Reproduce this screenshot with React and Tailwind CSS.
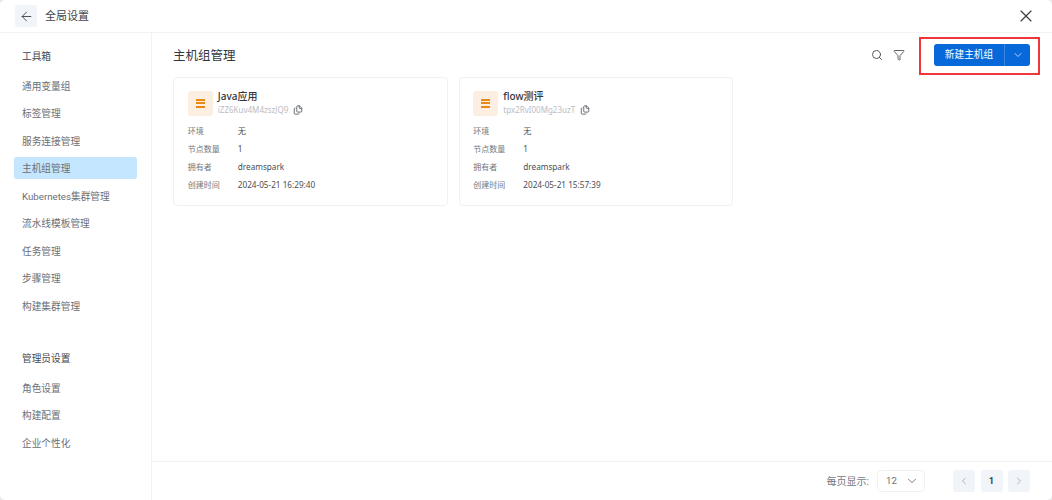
import React from "react";
import { ArrowLeft, X, Search, Filter, ChevronDown, ChevronLeft, ChevronRight, Files } from "lucide-react";

const tools = ["通用变量组", "标签管理", "服务连接管理", "主机组管理", "Kubernetes集群管理", "流水线模板管理", "任务管理", "步骤管理", "构建集群管理"];
const admin = ["角色设置", "构建配置", "企业个性化"];

function NavItem({ label, active }) {
  return (
    <div className={"h-[22px] mb-[5.5px] pl-2 pt-[4px] rounded-[3px] flex items-center text-[9.7px] text-[#6b6f76] " + (active ? "bg-[#c4e6ff] text-[#3d4249]" : "")}>
      {label}
    </div>
  );
}

function Row({ k, v }) {
  return (
    <div className="flex items-center h-[18px] text-[8.2px]">
      <span className="w-[50px] text-[8px] text-[#74787e]">{k}</span>
      <span className="text-[#4a4e54]">{v}</span>
    </div>
  );
}

function Card({ name, id, time }) {
  return (
    <div className="w-[274.5px] h-[129px] border border-[#f0f1f3] rounded-[4px] bg-white pt-[12px] pl-[13.8px]" style={{ fontFamily: '"Noto Sans", "Noto Sans CJK SC", sans-serif' }}>
      <div className="flex items-center gap-[5px] h-[26px]">
        <div className="w-[25px] h-[25px] rounded-[3px] bg-[#fdeee2] flex flex-col items-center justify-center gap-[1.5px]">
          <span className="block w-[9px] h-[2px] bg-[#ea8a16]" />
          <span className="block w-[9px] h-[2px] bg-[#ea8a16]" />
          <span className="block w-[9px] h-[2px] bg-[#ea8a16]" />
        </div>
        <div className="flex flex-col">
          <span className="text-[10px] leading-[12px] font-medium text-[#33373d]">{name}</span>
          <span className="mt-[2px] flex items-center gap-[5px] text-[8px] leading-[12px] text-[#b9bdc4]">
            {id}
            <Files size={10} strokeWidth={2.2} className="text-[#5f646b]" />
          </span>
        </div>
      </div>
      <div className="mt-[6px]">
        <Row k="环境" v="无" />
        <Row k="节点数量" v="1" />
        <Row k="拥有者" v="dreamspark" />
        <Row k="创建时间" v={time} />
      </div>
    </div>
  );
}

export default function App() {
  return (
    <div className="w-[1052px] h-[500px] bg-[#e8e8e8] overflow-hidden" style={{ fontFamily: 'Roboto, "Noto Sans CJK SC", sans-serif' }}>
      <div className="w-full h-full bg-white rounded-[5px] flex flex-col">
        <header className="h-[33px] shrink-0 border-b border-[#f1f2f4] flex items-center pl-[15px] pr-[16px]">
          <button className="w-[22px] h-[22px] rounded-[3px] bg-[#f1f4f8] flex items-center justify-center text-[#43474e]">
            <ArrowLeft size={15} strokeWidth={1.5} />
          </button>
          <span className="ml-[8px] mt-[2px] text-[11px] text-[#3f4349]">全局设置</span>
          <X size={20} strokeWidth={1.4} className="ml-auto text-[#3c4047]" />
        </header>
        <div className="flex flex-1 min-h-0">
          <aside className="w-[152px] shrink-0 border-r border-[#f1f2f4] pl-[14px] pr-[14px]">
            <div className="pl-2 mt-[17px] mb-[10px] h-[14px] flex items-center text-[9.7px] text-[#44484e]">工具箱</div>
            {tools.map((t) => <NavItem key={t} label={t} active={t === "主机组管理"} />)}
            <div className="pl-2 mt-[36px] mb-[10px] h-[14px] flex items-center text-[9.7px] text-[#44484e]">管理员设置</div>
            {admin.map((t) => <NavItem key={t} label={t} />)}
          </aside>
          <main className="flex-1 flex flex-col min-w-0">
            <div className="flex-1 pl-[21px] pr-[22px] pt-[11px]">
              <div className="flex items-center h-[22px]">
                <h1 className="text-[12.5px] mt-[2px] font-normal text-[#33373d]">主机组管理</h1>
                <div className="ml-auto flex items-center gap-[10px] text-[#43474e]">
                  <Search size={12} strokeWidth={1.8} />
                  <Filter size={12} strokeWidth={1.7} />
                </div>
                <div className="relative ml-[29px] flex h-[22px] w-[96px] rounded-[3px] bg-[#0769d9] text-white">
                  <div className="flex-1 flex items-center justify-center text-[9.7px] border-r border-[#3a86e0]">新建主机组</div>
                  <div className="w-[25px] flex items-center justify-center"><ChevronDown size={12} strokeWidth={1.4} /></div>
                  <div className="absolute -left-[15px] -top-[7px] -right-[10px] -bottom-[9px] border-2 border-[#f0353b] pointer-events-none" />
                </div>
              </div>
              <div className="flex gap-[11px] mt-[11px]">
                <Card name="Java应用" id="iZZ6Kuv4M4zszJQ9" time="2024-05-21 16:29:40" />
                <Card name="flow测评" id="tpx2RvI00Mg23uzT" time="2024-05-21 15:57:39" />
              </div>
            </div>
            <footer className="h-[39px] shrink-0 border-t border-[#f1f2f4] flex items-center pr-[22px] justify-end">
              <span className="text-[10px] text-[#74787e]">每页显示:</span>
              <div className="ml-[8px] w-[48px] h-[22px] rounded-[4px] border border-[#f0f1f3] flex items-center justify-between pl-[8px] pr-[5px] text-[9.7px] text-[#6b6f76]">
                12 <ChevronDown size={14} strokeWidth={1.5} />
              </div>
              <button className="ml-[28px] w-[22px] h-[22px] rounded-[3px] bg-[#f1f4f8] flex items-center justify-center text-[#9a9fa6]"><ChevronLeft size={12} strokeWidth={1.5} /></button>
              <button className="ml-[5.5px] w-[22px] h-[22px] rounded-[3px] bg-[#f1f4f8] flex items-center justify-center text-[9.5px] font-semibold text-[#33373d]">1</button>
              <button className="ml-[5.5px] w-[22px] h-[22px] rounded-[3px] bg-[#f1f4f8] flex items-center justify-center text-[#9a9fa6]"><ChevronRight size={12} strokeWidth={1.5} /></button>
            </footer>
          </main>
        </div>
      </div>
    </div>
  );
}
